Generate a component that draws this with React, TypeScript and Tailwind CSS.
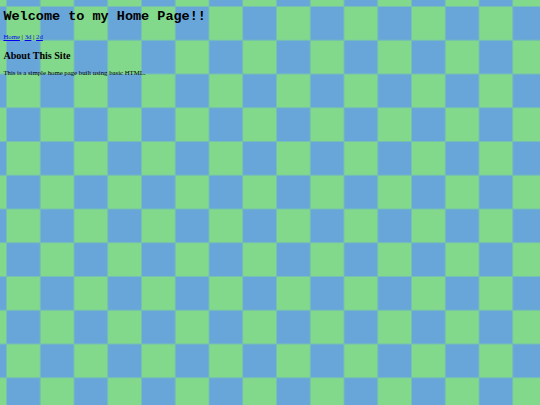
export default function App() {
  return (
    <div className="min-h-[405px] px-[3.4px] pt-px text-black bg-[linear-gradient(to_right,#74c0b2_1px,transparent_1px),linear-gradient(to_bottom,#74c0b2_1px,transparent_1px),conic-gradient(#68a5d9_25%,#82d98b_0_50%,#68a5d9_0_75%,#82d98b_0)] bg-size-[33.75px_33.75px,33.75px_33.75px,67.5px_67.5px] bg-position-[6px_6px,6px_6px,6.5px_6.5px]">
      <h1 className="mt-[8px] text-[13.5px] leading-[16px] font-bold font-['Liberation_Mono',monospace]">
        Welcome to my Home Page!!
      </h1>
      <nav className="mt-[7.7px] text-[6.75px] leading-[8px] font-['Liberation_Serif',serif]">
        <a href="#" className="text-[#0000ee] underline">Home</a>
        {' | '}
        <a href="#" className="text-[#0000ee] underline">3d</a>
        {' | '}
        <a href="#" className="text-[#0000ee] underline">2d</a>
      </nav>
      <h2 className="mt-[8.9px] text-[10.1px] leading-[12px] font-bold font-['Liberation_Serif',serif]">
        About This Site
      </h2>
      <p className="mt-[7.1px] text-[6.75px] leading-[8px] font-['Liberation_Serif',serif]">
        This is a simple home page built using basic HTML.
      </p>
    </div>
  );
}
